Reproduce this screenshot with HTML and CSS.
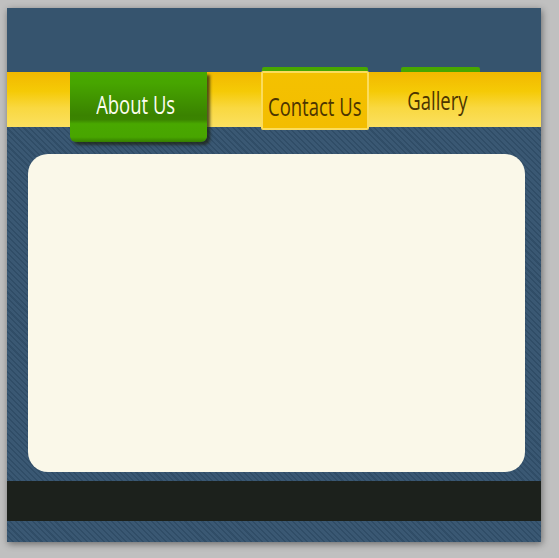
FILE: index.html
```html
<!DOCTYPE html>
<html lang="en">
<head>
    <meta charset="UTF-8">
    <meta name="viewport" content="width=device-width, initial-scale=1.0">
    <title>About Us</title>
    <link rel="stylesheet" href="styles.css">
</head>
<body>
    <div class="page">
        <header class="header"></header>
        <nav class="nav">
            <a class="tab tab-about"><span class="label">About Us</span></a>
            <div class="tab-group tab-group-contact">
                <div class="strip"></div>
                <a class="tab tab-contact"><span class="label">Contact Us</span></a>
            </div>
            <div class="tab-group tab-group-gallery">
                <div class="strip"></div>
                <a class="tab tab-gallery"><span class="label">Gallery</span></a>
            </div>
        </nav>
        <main class="main">
            <div class="card"></div>
        </main>
        <footer class="footer"></footer>
        <div class="bottom"></div>
    </div>
</body>
</html>
```

FILE: styles.css
```css
body {
    margin: 0;
    height: 558px;
    overflow: hidden;
    background-color: #c0c0c0;
    font-family: "Open Sans", "Liberation Sans", sans-serif;
}

.page {
    width: 534px;
    margin: 8px 0 0 7px;
    box-shadow: 1px 2px 7px rgba(0, 0, 0, 0.45);
    background-color: #36546e;
    background-image: repeating-linear-gradient(45deg, #304d67 0, #304d67 1.5px, #3a5873 1.5px, #3a5873 4px);
}

.header {
    height: 64px;
    background: #36546e;
}

.nav {
    display: flex;
    align-items: flex-start;
    height: 55px;
    padding-left: 63px;
    background: linear-gradient(#f2b800 0, #f5ca06 35%, #f9d840 65%, #fbe060 100%);
}

.tab {
    display: flex;
    justify-content: center;
    text-decoration: none;
}

.label {
    display: inline-block;
    font-size: 26px;
    line-height: 34px;
    white-space: nowrap;
    transform: scaleX(0.71);
}

.tab-about {
    box-sizing: border-box;
    width: 137px;
    height: 70px;
    padding: 15px 6px 0 0;
    color: #fdfdf0;
    border-radius: 0 0 6px 6px;
    background: linear-gradient(#48a900 0, #47a500 16%, #3a8200 62%, #3b8400 68%, #49a800 74%, #48a500 93%, #367d00 100%);
    box-shadow: 3px 3px 3px rgba(30, 35, 20, 0.75);
}

.tab-group {
    position: relative;
    z-index: 1;
    margin-top: -5px;
}

.tab-group-contact {
    width: 108px;
    margin-left: 54px;
}

.tab-group-gallery {
    width: 79px;
    margin-left: 32px;
}

.strip {
    height: 5px;
    background-color: #48a700;
    border-radius: 2px 2px 0 0;
}

.tab-group-contact .strip {
    height: 4px;
    margin: 0 1px;
}

.tab-contact {
    box-sizing: border-box;
    height: 59px;
    padding-top: 16px;
    color: #4c3500;
    background: linear-gradient(#f4c100, #f3bd00);
    border: 2px solid #fbdc5c;
    border-radius: 2px;
}

.tab-gallery {
    padding: 11px 7px 0 0;
    color: #4c3500;
}

.main {
    padding: 27px 16px 9px 21px;
}

.card {
    height: 318px;
    background-color: #faf8e9;
    border-radius: 20px;
}

.footer {
    height: 40px;
    background-color: #1c211c;
}

.bottom {
    height: 21px;
}
```
